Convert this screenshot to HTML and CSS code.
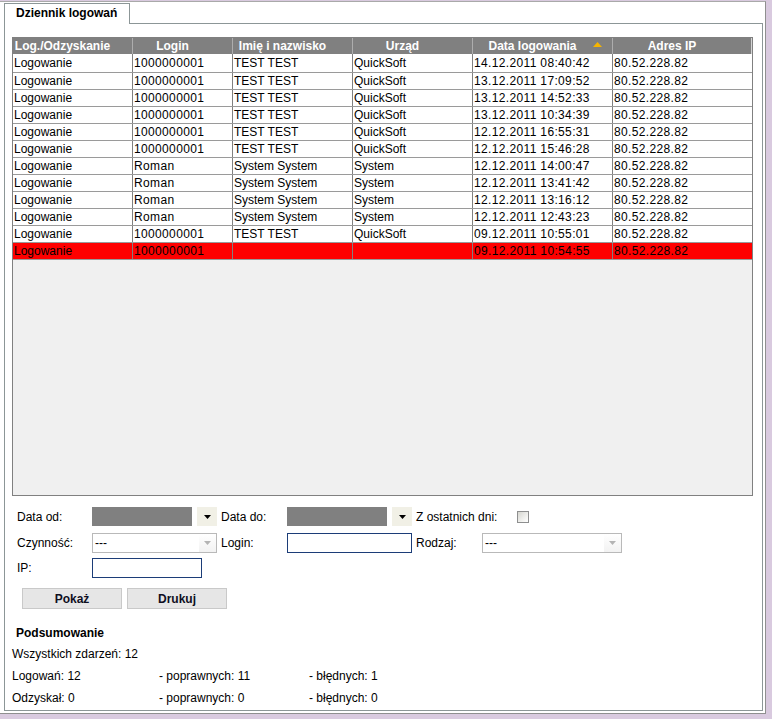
FILE: index.html
```html
<!DOCTYPE html>
<html lang="pl">
<head>
<meta charset="utf-8">
<title>Dziennik logowań</title>
<link rel="stylesheet" href="styles.css">
</head>
<body>
<div class="window">
  <div class="tabs"><div class="tab">Dziennik logowań</div></div>
  <div class="panel">
    <div class="grid">
      <div class="row head">
        <div class="c">Log./Odzyskanie</div>
        <div class="c">Login</div>
        <div class="c">Imię i nazwisko</div>
        <div class="c">Urząd</div>
        <div class="c sorted">Data logowania<svg class="sort" width="9" height="5" viewBox="0 0 9 5"><polygon points="0,5 4.5,0 9,5" fill="#f5b400"/></svg></div>
        <div class="c">Adres IP</div>
      </div>
      <div class="row first"><div class="c">Logowanie</div><div class="c">1000000001</div><div class="c">TEST TEST</div><div class="c">QuickSoft</div><div class="c">14.12.2011 08:40:42</div><div class="c">80.52.228.82</div></div>
      <div class="row"><div class="c">Logowanie</div><div class="c">1000000001</div><div class="c">TEST TEST</div><div class="c">QuickSoft</div><div class="c">13.12.2011 17:09:52</div><div class="c">80.52.228.82</div></div>
      <div class="row"><div class="c">Logowanie</div><div class="c">1000000001</div><div class="c">TEST TEST</div><div class="c">QuickSoft</div><div class="c">13.12.2011 14:52:33</div><div class="c">80.52.228.82</div></div>
      <div class="row"><div class="c">Logowanie</div><div class="c">1000000001</div><div class="c">TEST TEST</div><div class="c">QuickSoft</div><div class="c">13.12.2011 10:34:39</div><div class="c">80.52.228.82</div></div>
      <div class="row"><div class="c">Logowanie</div><div class="c">1000000001</div><div class="c">TEST TEST</div><div class="c">QuickSoft</div><div class="c">12.12.2011 16:55:31</div><div class="c">80.52.228.82</div></div>
      <div class="row"><div class="c">Logowanie</div><div class="c">1000000001</div><div class="c">TEST TEST</div><div class="c">QuickSoft</div><div class="c">12.12.2011 15:46:28</div><div class="c">80.52.228.82</div></div>
      <div class="row"><div class="c">Logowanie</div><div class="c">Roman</div><div class="c">System System</div><div class="c">System</div><div class="c">12.12.2011 14:00:47</div><div class="c">80.52.228.82</div></div>
      <div class="row"><div class="c">Logowanie</div><div class="c">Roman</div><div class="c">System System</div><div class="c">System</div><div class="c">12.12.2011 13:41:42</div><div class="c">80.52.228.82</div></div>
      <div class="row"><div class="c">Logowanie</div><div class="c">Roman</div><div class="c">System System</div><div class="c">System</div><div class="c">12.12.2011 13:16:12</div><div class="c">80.52.228.82</div></div>
      <div class="row"><div class="c">Logowanie</div><div class="c">Roman</div><div class="c">System System</div><div class="c">System</div><div class="c">12.12.2011 12:43:23</div><div class="c">80.52.228.82</div></div>
      <div class="row"><div class="c">Logowanie</div><div class="c">1000000001</div><div class="c">TEST TEST</div><div class="c">QuickSoft</div><div class="c">09.12.2011 10:55:01</div><div class="c">80.52.228.82</div></div>
      <div class="row error"><div class="c">Logowanie</div><div class="c">1000000001</div><div class="c"></div><div class="c"></div><div class="c">09.12.2011 10:54:55</div><div class="c">80.52.228.82</div></div>
    </div>

    <div class="filters">
      <div class="frow r1">
        <span class="lbl first">Data od:</span>
        <span class="datebox"></span>
        <span class="ddbtn"><svg width="7" height="4" viewBox="0 0 7 4"><polygon points="0,0 7,0 3.5,4" fill="#000"/></svg></span>
        <span class="lbl">Data do:</span>
        <span class="datebox"></span>
        <span class="ddbtn"><svg width="7" height="4" viewBox="0 0 7 4"><polygon points="0,0 7,0 3.5,4" fill="#000"/></svg></span>
        <span class="lbl wide">Z ostatnich dni:</span>
        <span class="checkbox"></span>
      </div>
      <div class="frow r2">
        <span class="lbl first">Czynność:</span>
        <span class="select s125"><span class="sv">---</span><span class="sa"><svg width="7" height="4" viewBox="0 0 7 4"><polygon points="0,0 7,0 3.5,4" fill="#b4b4b4"/></svg></span></span>
        <span class="lbl">Login:</span>
        <span class="input w125"></span>
        <span class="lbl">Rodzaj:</span>
        <span class="select s140"><span class="sv">---</span><span class="sa"><svg width="7" height="4" viewBox="0 0 7 4"><polygon points="0,0 7,0 3.5,4" fill="#b4b4b4"/></svg></span></span>
      </div>
      <div class="frow r3">
        <span class="lbl first">IP:</span>
        <span class="input w110"></span>
      </div>
      <div class="buttons">
        <span class="btn">Pokaż</span>
        <span class="btn">Drukuj</span>
      </div>
    </div>

    <div class="summary">
      <div class="stitle">Podsumowanie</div>
      <div class="sline">Wszystkich zdarzeń: 12</div>
      <div class="sgrid">
        <span>Logowań: 12</span><span>- poprawnych: 11</span><span>- błędnych: 1</span>
        <span>Odzyskał: 0</span><span>- poprawnych: 0</span><span>- błędnych: 0</span>
      </div>
    </div>
  </div>
</div>
</body>
</html>
```

FILE: styles.css
```css
* { box-sizing: border-box; }
html, body { margin: 0; padding: 0; }
body {
  width: 772px;
  height: 719px;
  overflow: hidden;
  background: #d9cadf;
  font-family: "Liberation Sans", Arial, sans-serif;
  font-size: 12px;
  color: #000;
}
.window {
  width: 766px;
  height: 713px;
  margin-top: 1px;
  background: #fff;
  border-top: 1px solid #a9a9a9;
  border-right: 1px solid #8f8f8f;
  border-bottom: 1px solid #8f8f8f;
  padding: 1px 0 0 4px;
}
.tabs { display: flex; }
.tab {
  position: relative;
  z-index: 1;
  width: 126px;
  height: 21px;
  margin-bottom: -1px;
  background: #fff;
  border: 1px solid #8c9697;
  border-bottom: none;
  padding-left: 11px;
  line-height: 19px;
  font-weight: bold;
}
.panel {
  width: 759px;
  height: 688px;
  border: 1px solid #8c9697;
  padding: 13px 0 0 7px;
}
.grid {
  width: 741px;
  height: 459px;
  border: 1px solid #808080;
  background: #f0f0f0;
}
.row {
  display: grid;
  grid-template-columns: 120px 100px 120px 120px 140px 139px;
  height: 17px;
  background: #fff;
  border-bottom: 1px solid #9a9a9a;
}
.row.first { height: 19px; }
.row .c {
  border-right: 1px solid #808080;
  padding-left: 1px;
  white-space: nowrap;
  overflow: hidden;
  display: flex;
  align-items: center;
}
.row .c:nth-child(2),
.row .c:nth-child(5),
.row .c:nth-child(6) { letter-spacing: 0.35px; }
.row .c:last-child { border-right: none; }
.row.head {
  height: 16px;
  background: #808080;
  border-bottom: none;
}
.row.head .c {
  color: #fff;
  font-weight: bold;
  letter-spacing: 0;
  justify-content: center;
  padding: 0 20px 0 0;
  border-right: 1px solid #adadad;
  position: relative;
}
.row.head .c:last-child { border-right: 1px solid #d4d4d4; }
.row.head .sorted .sort {
  position: absolute;
  right: 10px;
  top: 4px;
}
.row.error { background: #ff0000; }

.filters { margin-top: 11px; }
.frow {
  display: flex;
  align-items: center;
}
.frow.r1 { height: 19px; }
.frow.r2 { height: 20px; margin-top: 7px; }
.frow.r3 { height: 20px; margin-top: 5px; }
.lbl {
  width: 66px;
  margin-left: 4px;
  white-space: nowrap;
}
.lbl.first { width: 80px; margin-left: 0; padding-left: 5px; }
.lbl.wide { width: 100px; }
.datebox {
  width: 100px;
  height: 19px;
  background: #808080;
}
.ddbtn {
  width: 20px;
  height: 19px;
  margin-left: 5px;
  background: #f1f0e6;
  display: flex;
  align-items: center;
  justify-content: center;
}
.checkbox {
  width: 12px;
  height: 12px;
  margin-left: 1px;
  border: 1px solid #8e8f8f;
  background: linear-gradient(135deg, #d6d6d0 0%, #f4f4f2 70%, #fff 100%);
}
.select {
  height: 20px;
  border: 1px solid #b9b9b9;
  background: #fff;
  display: flex;
  align-items: center;
}
.select.s125 { width: 125px; }
.select.s140 { width: 140px; }
.select .sv { flex: 1; padding-left: 2px; }
.select .sa {
  width: 17px;
  height: 18px;
  display: flex;
  align-items: center;
  justify-content: center;
  background: linear-gradient(#ffffff, #f2f2f2);
}
.input {
  height: 20px;
  border: 1px solid #1c3d78;
  background: #fff;
}
.input.w125 { width: 125px; }
.input.w110 { width: 110px; }
.buttons {
  display: flex;
  gap: 5px;
  margin: 10px 0 0 10px;
}
.btn {
  width: 100px;
  height: 21px;
  background: #e6e6e6;
  border: 1px solid #c9c9c9;
  font-weight: bold;
  color: #0f0f1f;
  display: flex;
  align-items: center;
  justify-content: center;
}

.summary { margin-top: 16px; }
.stitle {
  font-weight: bold;
  line-height: 16px;
  padding-left: 4px;
  margin-bottom: 3px;
}
.sline { line-height: 21.5px; }
.sgrid {
  display: grid;
  grid-template-columns: 147px 150px auto;
  grid-auto-rows: 21.5px;
  align-items: center;
}
```
